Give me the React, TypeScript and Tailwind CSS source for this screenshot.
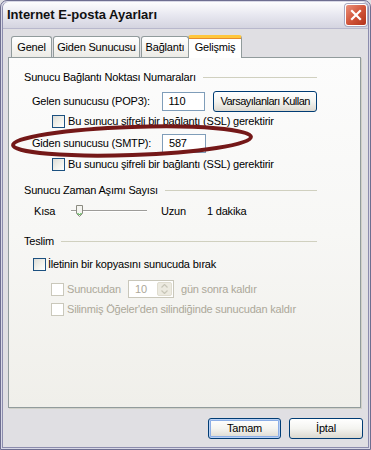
import React from 'react';

function Checkbox({ disabled }: { disabled?: boolean }) {
  return disabled ? (
    <span className="block w-[13px] h-[13px] shrink-0 border border-[#cac8bb] bg-white" />
  ) : (
    <span className="block w-[13px] h-[13px] shrink-0 border border-[#1c5180] bg-gradient-to-br from-[#dcdcd7] via-[#f0f0ea] to-white" />
  );
}

function GroupHeader({ title, className }: { title: string; className?: string }) {
  return (
    <div className={`flex items-center gap-[7px] h-[14px] ${className ?? ''}`}>
      <span>{title}</span>
      <div className="flex-1 h-px bg-[#d0d0bf]" />
    </div>
  );
}

function Tab({ label, selected, className }: { label: string; selected?: boolean; className?: string }) {
  if (selected) {
    return (
      <div className={`relative z-10 -ml-[2px] h-[23px] flex items-center justify-center bg-white border border-b-0 border-[#919b9c] rounded-t-[3px] border-t-[3px] border-t-[#ffc73c] shadow-[inset_0_1px_0_#e68b2c] -mb-px pb-[2px] ${className ?? ''}`}>
        {label}
      </div>
    );
  }
  return (
    <div className={`h-[21px] flex items-center justify-center bg-gradient-to-b from-white to-[#ecebe6] border border-b-0 border-[#919b9c] rounded-t-[3px] ${className ?? ''}`}>
      {label}
    </div>
  );
}

function XpButton({ label, focused, className }: { label: string; focused?: boolean; className?: string }) {
  return (
    <div
      className={`h-[21px] flex items-center justify-center rounded-[3px] border border-[#003c74] bg-gradient-to-b from-white via-[#f4f4f0] to-[#dcd9d0] ${
        focused ? 'shadow-[inset_0_0_0_1px_#b9d1f5,inset_0_0_0_2px_#8caee6]' : ''
      } ${className ?? ''}`}
    >
      {label}
    </div>
  );
}

export default function App() {
  return (
    <div className="relative w-[371px] h-[450px] overflow-hidden bg-[#e0dfe3] font-['Liberation_Sans',Arial,sans-serif] text-[11px] text-black tracking-[-0.2px]">
      <div className="w-full h-full flex flex-col border border-[#6e6e90] rounded-t-[7px] bg-[#d8d8e6] p-px">
        <div className="flex-1 flex flex-col border border-[#8c8cad] border-t-0 rounded-t-[6px] bg-[#e0dfe3]">
          {/* Title bar */}
          <div className="h-[27px] shrink-0 flex items-center justify-between pl-[4px] pr-[1px] rounded-t-[6px] bg-gradient-to-b from-[#fdfdfe] via-[#e8e8f0] to-[#d4d4e0] border-b border-[#b8b8cc]">
            <span className="font-bold text-[13px] text-[#111] tracking-normal">Internet E-posta Ayarları</span>
            <div className="w-[22px] h-[22px] rounded-[3px] border border-white bg-gradient-to-br from-[#e9907a] via-[#d2553a] to-[#b2321a] flex items-center justify-center shadow-[0_0_0_1px_#a8a8c0]">
              <svg width="12" height="12" viewBox="0 0 12 12">
                <path d="M2 2 L10 10 M10 2 L2 10" stroke="white" strokeWidth="2.2" strokeLinecap="square" />
              </svg>
            </div>
          </div>

          {/* Body */}
          <div className="flex-1 flex flex-col pl-[5px] pr-[7px] pt-[6px]">
            <div className="flex items-end gap-px pl-[3px] h-[22px]">
              <Tab label="Genel" className="w-[41px]" />
              <Tab label="Giden Sunucusu" className="w-[87px]" />
              <Tab label="Bağlantı" className="w-[48px]" />
              <Tab label="Gelişmiş" selected className="w-[54px]" />
            </div>
            <div className="h-[351px] border border-[#919b9c] bg-gradient-to-b from-[#fcfcfc] via-[#f7f7f5] to-[#f0efea] pl-[15px] pr-[43px] pt-[12px] shadow-[1px_1px_0_#d0d0c8]">
              <GroupHeader title="Sunucu Bağlantı Noktası Numaraları" />

              <div className="flex items-center h-[20px] mt-[7px] pl-[8px]">
                <span className="w-[130px]">Gelen sunucusu (POP3):</span>
                <div className="w-[44px] h-[19px] border border-[#7f9db9] bg-white flex items-center pl-[6px]">110</div>
                <XpButton label="Varsayılanları Kullan" className="ml-[8px] w-[104px] tracking-[-0.5px]" />
              </div>

              <div className="flex items-center gap-[3px] h-[13px] mt-[4px] pl-[28px]">
                <Checkbox />
                <span>Bu sunucu şifreli bir bağlantı (SSL) gerektirir</span>
              </div>

              <div className="flex items-center h-[20px] mt-[5px] pl-[8px]">
                <span className="w-[130px]">Giden sunucusu (SMTP):</span>
                <div className="w-[44px] h-[19px] border border-[#7f9db9] bg-white flex items-center pl-[6px]">587</div>
              </div>

              <div className="flex items-center gap-[3px] h-[13px] mt-[5px] pl-[28px]">
                <Checkbox />
                <span>Bu sunucu şifreli bir bağlantı (SSL) gerektirir</span>
              </div>

              <GroupHeader title="Sunucu Zaman Aşımı Sayısı" className="mt-[12px]" />

              <div className="flex items-center h-[14px] mt-[7px] pl-[10px]">
                <span className="w-[37px]">Kısa</span>
                <div className="relative w-[76px] h-[12px] flex items-center">
                  <div className="w-full h-[2px] border-t border-[#9d9c99] border-b border-b-white" />
                  <svg className="absolute left-[5px] top-0" width="7" height="12" viewBox="0 0 7 12">
                    <path d="M0.5 0.5 H6.5 V8.5 L3.5 11.5 L0.5 8.5 Z" fill="#f4f4f0" stroke="#8a8a80" />
                    <path d="M1.5 8 L3.5 10 L5.5 8" fill="none" stroke="#21a121" />
                  </svg>
                </div>
                <span className="ml-[14px] w-[46px]">Uzun</span>
                <span>1 dakika</span>
              </div>

              <GroupHeader title="Teslim" className="mt-[16px]" />

              <div className="flex items-center gap-[2px] h-[13px] mt-[10px] pl-[9px]">
                <Checkbox />
                <span>İletinin bir kopyasını sunucuda bırak</span>
              </div>

              <div className="flex items-center h-[18px] mt-[9px] pl-[27px] text-[#aca899]">
                <Checkbox disabled />
                <span className="ml-[3px] w-[61px]">Sunucudan</span>
                <div className="w-[46px] h-[18px] border border-[#c9c7ba] bg-white flex items-center justify-between pl-[6px] pr-px">
                  <span>10</span>
                  <div className="w-[15px] h-[14px] rounded-[2px] bg-[#eceae0] border border-[#e0ddd0] flex flex-col items-center justify-center gap-[2px]">
                    <svg width="7" height="4" viewBox="0 0 7 4">
                      <path d="M0.5 3.5 L3.5 0.5 L6.5 3.5" fill="none" stroke="#c8c6b8" strokeWidth="1.2" />
                    </svg>
                    <svg width="7" height="4" viewBox="0 0 7 4">
                      <path d="M0.5 0.5 L3.5 3.5 L6.5 0.5" fill="none" stroke="#c8c6b8" strokeWidth="1.2" />
                    </svg>
                  </div>
                </div>
                <span className="ml-[7px]">gün sonra kaldır</span>
              </div>

              <div className="flex items-center h-[13px] mt-[5px] pl-[27px] text-[#aca899]">
                <Checkbox disabled />
                <span className="ml-[3px]">Silinmiş Öğeler'den silindiğinde sunucudan kaldır</span>
              </div>
            </div>

            <div className="flex justify-end gap-[8px] mt-[10px] -mr-[2px]">
              <XpButton label="Tamam" focused className="w-[73px]" />
              <XpButton label="İptal" className="w-[74px]" />
            </div>
          </div>
        </div>
      </div>

      {/* Red annotation ellipse */}
      <svg className="absolute left-0 top-[116px] pointer-events-none" width="270" height="50" viewBox="0 0 270 50">
        <ellipse cx="132" cy="25" rx="119" ry="14" transform="rotate(-2 132 25)" fill="none" stroke="#741818" strokeWidth="4" />
      </svg>
    </div>
  );
}
